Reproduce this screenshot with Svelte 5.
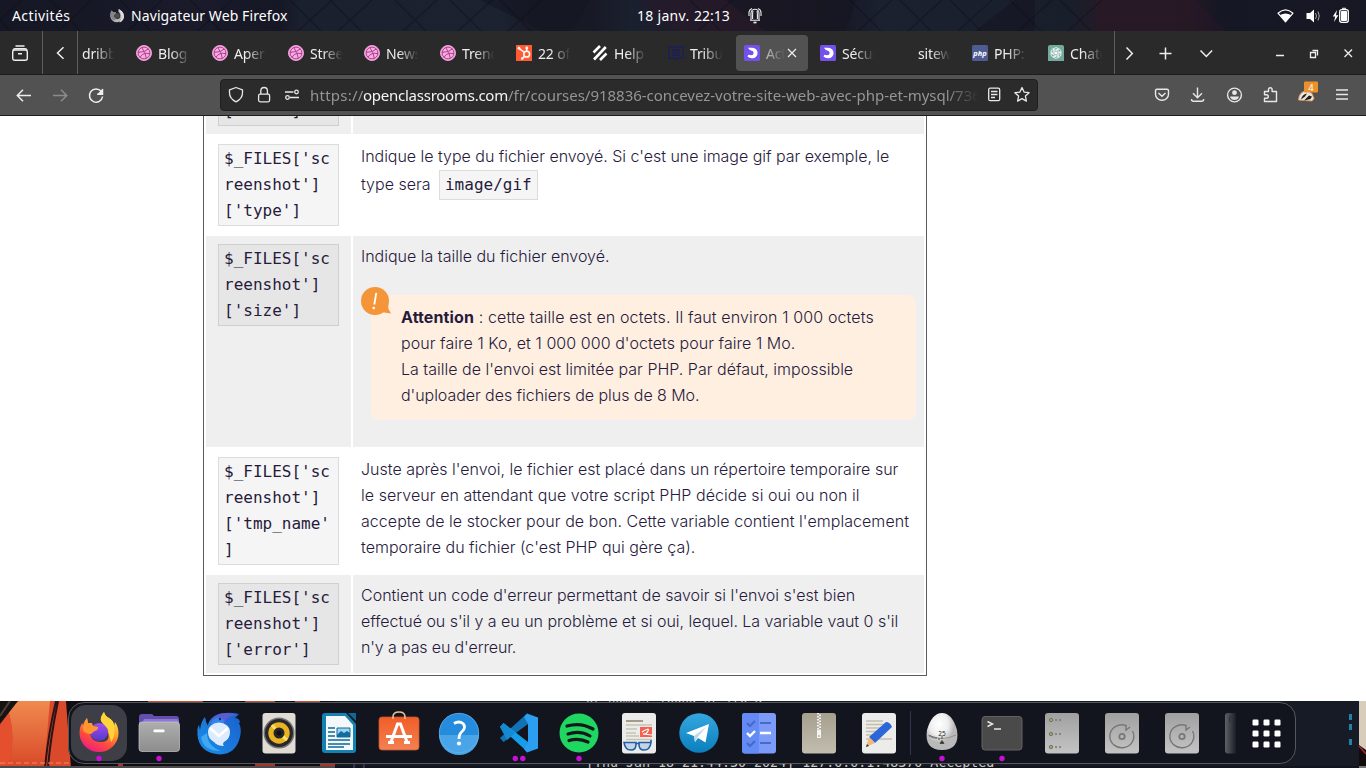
<script>
  const tabs = [
    { icon: 'dribbble', label: 'Blog' },
    { icon: 'dribbble', label: 'Aper' },
    { icon: 'dribbble', label: 'Stree' },
    { icon: 'dribbble', label: 'News' },
    { icon: 'dribbble', label: 'Trend' },
    { icon: 'hubspot', label: '22 of' },
    { icon: 'helpscout', label: 'Help' },
    { icon: 'tribune', label: 'Tribu' },
    { icon: 'oc', label: 'Act', active: true },
    { icon: 'oc', label: 'Sécur' },
    { icon: 'none', label: 'sitew' },
    { icon: 'php', label: 'PHP:' },
    { icon: 'gpt', label: 'Chatg' }
  ];
  const fence = [-20, 50, 120, 190, 290, 330, 395, 450, 500, 690, 850, 900, 950, 1010, 1060];
  const petals = [0, 60, 120, 180, 240, 300];
  const grid = [-13.5, -2.5, 8.5];
</script>

<div class="screen">
  <header class="topbar">
    <svg class="fence" width="1366" height="31">
      <path d="M480 0h110l-18 31h-30zM726 0h130l-10 31h-80zM1015 0h20v31h-60z" fill="#141622" opacity=".6" />
      <path d="M640 0h85l40 31h-90zM1096 0h100l30 31h-130z" fill="#34172a" opacity=".3" />
      {#each fence as x}
        <path d="M{x} 0l31 31M{x + 42} 0l-34 31" stroke="#0d1019" stroke-width="1.6" opacity=".4" />
      {/each}
    </svg>
    <span class="activities">Activités</span>
    <svg class="ffgrey" width="16" height="16" viewBox="0 0 16 16">
      <path d="M1.300 8.500Q1 5 2.600 2.500L4.400 4.400 6.800 4.200 7.200 6 5 7.500Q5 10.500 8 11 11.300 11 11.300 7.500 11 5 9.300 3.800L9.600.9Q15 3.500 15 8.400A6.900 6.600 0 0 1 1.300 8.500z" fill="#b4b4b4" />
      <path d="M9.600.9Q15 3.500 15 8.400 14.500 13 10.500 14.500 14 10 11.500 5z" fill="#dedede" />
      <path d="M1.300 8.500Q1 5 2.600 2.500L4.400 4.400 6.800 4.200 7.200 6 5 7.500Q5 10.500 8 11l-4 1.500z" fill="#858585" />
      <circle cx="8.200" cy="7.700" r="2.600" fill="#4c4c50" />
    </svg>
    <span class="appname">Navigateur Web Firefox</span>
    <span class="clock"><span class="date">18 janv.</span><span>22:13</span></span>
    <svg class="bell" width="16" height="18" viewBox="0 0 16 18" fill="none" stroke="#eee" stroke-width="1.1">
      <path d="M3 13.300h10M4 13V6.200a4 4 0 0 1 8 0V13M6 3.800Q5.500 5 5.600 12M10 3.800q.5 1.200.4 8.200M2 9V5.200Q2.400 2.400 5 1.400M14 9V5.200Q13.600 2.400 11 1.400" />
      <path d="M6.500 15.500h3" stroke-width="1.700" />
    </svg>
    <svg class="status" width="76" height="20" viewBox="0 0 76 20">
      <path d="M1 7.200Q8.500.5 16 7.200L8.500 15.800z" fill="none" stroke="#fff" stroke-width="1.200" stroke-linejoin="round" />
      <path d="M3 9Q8.500 6 14 9L8.500 16z" fill="#fff" />
      <path d="M29.500 7h3.500L37 3.500V16.500L33 13h-3.500z" fill="#fff" />
      <path d="M38.500 7q2 3 0 6M41 5.500q2.600 4.500 0 9" fill="none" stroke="#aaa" stroke-width="1" />
      <path d="M60 4l-4.200 6.500h2.400L57 16l4.400-6.700H59z" fill="#fff" />
      <rect x="62.700" y="3.700" width="8.600" height="12.600" rx="2" fill="none" stroke="#fff" stroke-width="1.300" />
      <path d="M65 2.300h4M64.500 5.500h5v9h-5z" stroke="#fff" stroke-width="1" fill="#fff" />
    </svg>
  </header>

  <div class="tabbar">
    <div class="cell view">
      <svg width="18" height="18" viewBox="0 0 18 18" fill="none" stroke="#eee" stroke-width="1.400"><rect x="1.700" y="6" width="14.600" height="10.300" rx="2" /><path d="M2 6q.5-1.200 2-1.200h10q1.500 0 2 1.200M4.500 2h9M7 9.700h4" /></svg>
    </div>
    <div class="cell prev">
      <svg width="10" height="14" viewBox="0 0 10 14" fill="none" stroke="#eee" stroke-width="1.500"><path d="M8.500 1.200l-6 5.800 6 5.800" /></svg>
    </div>
    <div class="tabs">
      <div class="tab first"><span class="label">dribb</span></div>
      {#each tabs as t}
        <div class="tab" class:active={t.active}>
          <svg width="16" height="16" viewBox="0 0 16 16">
            {#if t.icon === 'dribbble'}
              <circle cx="8" cy="8" r="7.500" fill="#f5aee2" stroke="#f2a0dc" />
              <g fill="none" stroke="#b23c8e" stroke-width="1"><circle cx="8" cy="8" r="5.900" /><path d="M5.800 2.500Q9.500 7 10.300 13.400M2.200 7.300Q9 7.500 12.400 4M4 12.300Q7 7 13.900 8.700" /></g>
            {:else if t.icon === 'hubspot'}
              <rect width="16" height="16" fill="#ff5c35" />
              <g fill="none" stroke="#fff" stroke-width="1.500"><circle cx="10.700" cy="9.200" r="2.900" /><path d="M10.700 6.200V3M8.500 7.500L3 3.300M8.600 11.300L6.500 13.300" /></g>
              <circle cx="10.700" cy="2.900" r="1.300" fill="#fff" /><circle cx="3" cy="3.200" r="1.400" fill="#fff" /><circle cx="6.200" cy="13.500" r="1.200" fill="#fff" />
            {:else if t.icon === 'helpscout'}
              <path d="M1.500 7.500L8 1M2 14.500L13.800 2M8 15L14.500 8.500" stroke="#fff" stroke-width="2.600" />
            {:else if t.icon === 'tribune'}
              <path d="M1 2h14v11H9.500L8 14.500 6.500 13H1zM4 5h8M4 7.500h8M4 10h8" fill="none" stroke="#1b1f5c" stroke-width="1.400" />
            {:else if t.icon === 'oc'}
              <rect width="16" height="16" rx="1.500" fill="#7451eb" />
              <path d="M4 2.800h4.400a5.200 5.200 0 0 1 0 10.400q-3.200.2-4.900-1.800l.8-1.600q5.200 1.400 5.400-1.800Q9.500 5.500 7 5.400 5 5.200 4 2.800z" fill="#fff" />
            {:else if t.icon === 'php'}
              <rect width="16" height="16" rx="1.500" fill="#4f5b93" />
              <text x="8" y="10.500" text-anchor="middle" font-size="7.500" font-weight="700" font-style="italic" font-family="Noto Sans, sans-serif" fill="#fff">php</text>
            {:else if t.icon === 'gpt'}
              <path d="M2 0h12q2 0 2 2v14H0V2Q0 0 2 0z" fill="#75a99c" />
              {#each petals as a}
                <path d="M5.200 8V5.300Q5.500 2.500 8.200 2.600 10 2.700 10.600 4.200L8 5.700v3" transform="rotate({a} 8 8)" fill="none" stroke="#fff" stroke-width=".8" />
              {/each}
            {/if}
          </svg>
          <span class="label">{t.label}</span>
          {#if t.active}
            <svg class="x" width="10" height="10" viewBox="0 0 10 10" stroke="#eee" stroke-width="1.200"><path d="M1 1l8 8M9 1L1 9" /></svg>
          {/if}
        </div>
      {/each}
    </div>
    <svg class="controls" width="251" height="43" viewBox="1115 31 251 43" fill="none" stroke="#eee" stroke-width="1.500">
      <path d="M1126.500 47.500l5.800 6-5.800 6M1159.500 53.500h12M1165.500 47.500v12M1200.500 50.500l5.800 6 5.800-6" />
      <path d="M1276 55.500h8M1310.500 52.500h5v5h-5zM1312.500 50.500h5v5M1344.500 49.500l7.500 7.500M1352 49.500l-7.500 7.500" stroke-width="1.300" />
    </svg>
  </div>

  <nav class="navbar">
    <svg class="navbtns" width="220" height="40" viewBox="0 76 220 40" fill="none" stroke="#eee" stroke-width="1.500">
      <path d="M31 96.500H17.500M23 90.800L17.300 96.500l5.700 5.700" />
      <path d="M53 96.500h13.500M61 90.800l5.700 5.700-5.700 5.700" stroke="#8c8c8c" />
      <path d="M101.300 92.500A6.600 6.600 0 1 0 102.600 97.500M102.500 90v5.200h-5.200" /><path d="M103 89.500v6h-6z" fill="#eee" stroke="none" />
    </svg>
    <div class="urlbar">
      <svg width="84" height="30" viewBox="221 80.500 84 30" fill="none" stroke="#e8e8e8" stroke-width="1.300">
        <path d="M236 88l6.500 2.300v3q0 6-6.500 9-6.500-3-6.500-9v-3z" stroke-linejoin="round" />
        <rect x="258.600" y="94.700" width="11" height="7.600" rx="1.500" /><path d="M260.800 94.500v-3.200a3.300 3.300 0 0 1 6.600 0v3.200" />
        <path d="M285 92.500h8.500M290 98h9" /><circle cx="296.500" cy="92.500" r="1.800" /><circle cx="287.500" cy="98" r="1.800" />
      </svg>
      <div class="url"><span class="u1">https://</span><span class="host">openclassrooms.com</span><span class="u2">/fr/courses/918836-concevez-votre-site-web-avec-php-et-mysql/736</span></div>
      <svg width="58" height="30" viewBox="979 80.500 58 30" fill="none" stroke="#e8e8e8" stroke-width="1.300">
        <rect x="988.700" y="88.700" width="11" height="12.500" rx="1.500" /><path d="M991 92h6.500M991 95h6.500M991 98h4" />
        <path d="M1022 88l2.100 4.600 5 .6-3.700 3.400 1 5-4.400-2.500-4.400 2.500 1-5-3.700-3.400 5-.6z" stroke-linejoin="round" />
      </svg>
    </div>
    <svg class="exts" width="328" height="40" viewBox="1038 75.500 328 40" fill="none" stroke="#e8e8e8" stroke-width="1.400">
      <path d="M1157 89.700h10q1.500 0 1.500 1.500v3.500a6.500 6 0 0 1-13 0v-3.500q0-1.500 1.500-1.500zM1158.500 93.500l3.500 3.200 3.500-3.200" />
      <path d="M1197.500 88v10M1193 93.800l4.500 4.500 4.500-4.500M1191.500 99.500q0 2.300 2 2.300h8q2.200 0 2.200-2.300" />
      <circle cx="1234.500" cy="95.500" r="6.900" /><circle cx="1234.500" cy="93.200" r="2.400" fill="#e8e8e8" stroke="none" /><path d="M1230 97h9q-1 3.500-4.500 3.500T1230 97z" fill="#e8e8e8" stroke="none" />
      <path d="M1264.500 92h4v-2a1.800 1.800 0 0 1 3.600 0v2h4.400v10h-12v-3.200h2a1.800 1.800 0 0 0 0-3.600h-2z" stroke-linejoin="round" />
      <path d="M1298.500 100.500Q1299 92 1307 91l5 3 2 5-2 2.500z" fill="#e9e6e2" stroke="#ed9854" stroke-width=".9" />
      <path d="M1301 100q1-5 6-6l-2 3zM1304 101l5-5 3 1-1.500 2.500z" fill="#1f1c1b" stroke="none" />
      <rect x="1304" y="82" width="14" height="11" rx="1" fill="#ee912a" stroke="none" />
      <text x="1311" y="91" text-anchor="middle" font-family="Noto Sans, sans-serif" font-size="9.500" fill="#fff" stroke="none">4</text>
      <path d="M1336 90.500h12M1336 95h12M1336 99.500h12" />
    </svg>
  </nav>

  <main>
    <div class="table">
      <div class="row r0 grey"><div class="k"><code>$_FILES['sc<br />reenshot']<br />['name']</code></div><div class="v"></div></div>
      <div class="row r1"><div class="k"><code>$_FILES['sc<br />reenshot']<br />['type']</code></div>
        <div class="v"><span class="t1">Indique le type du fichier envoyé. Si c'est une image gif par exemple, le</span><br />type sera <code class="inline">image/gif</code></div></div>
      <div class="row r2 grey"><div class="k"><code>$_FILES['sc<br />reenshot']<br />['size']</code></div>
        <div class="v">Indique la taille du fichier envoyé.
          <aside>
            <svg class="warn" width="32" height="30" viewBox="0 0 32 30"><circle cx="14" cy="14" r="14" fill="#f5953a" /><path d="M27 17l.5 5 2.500 4.500L20 25z" fill="#f5953a" /><path d="M15.300 5.800L13.300 17.500" stroke="#fff" stroke-width="1.800" /><circle cx="12.700" cy="21" r="1.300" fill="#fff" /></svg>
            <span class="w3"><b>Attention</b> : cette taille est en octets. Il faut environ 1 000 octets</span><br /><span class="w2">pour faire 1 Ko, et 1 000 000 d'octets pour faire 1 Mo.</span><br /><span class="w1">La taille de l'envoi est limitée par PHP. Par défaut, impossible</span><br /><span class="t2">d'uploader des fichiers de plus de 8 Mo.</span>
          </aside>
        </div></div>
      <div class="row r3"><div class="k"><code>$_FILES['sc<br />reenshot']<br />['tmp_name'<br />]</code></div>
        <div class="v">Juste après l'envoi, le fichier est placé dans un répertoire temporaire sur<br /><span class="w2">le serveur en attendant que votre script PHP décide si oui ou non il</span><br /><span class="w2">accepte de le stocker pour de bon. Cette variable contient l'emplacement</span><br />temporaire du fichier (c'est PHP qui gère ça).</div></div>
      <div class="row r4 grey"><div class="k"><code>$_FILES['sc<br />reenshot']<br />['error']</code></div>
        <div class="v">Contient un code d'erreur permettant de savoir si l'envoi s'est bien<br /><span class="t1">effectué ou s'il y a eu un problème et si oui, lequel. La variable vaut 0 s'il</span><br /><span class="t3">n'y a pas eu d'erreur.</span></div></div>
    </div>
  </main>

  <footer>
    <svg class="wall" width="1366" height="67" viewBox="0 701 1366 67">
      <defs>
        <linearGradient id="or" x2="0" y2="1"><stop stop-color="#f08a50" /><stop offset="1" stop-color="#d84826" /></linearGradient>
      </defs>
      <rect y="701" width="1366" height="67" fill="#171b26" />
      <rect y="701" width="335" height="67" fill="#110d10" />
      <path d="M0 718L12 701H66L71 768H0z" fill="#da4929" />
      <path d="M8 712Q14 701 20 701H50L44 768H8q9-32 0-56z" fill="url(#or)" /><path d="M0 726l9-14q7 28-1 53H0z" fill="#e4502e" />
      <path d="M56 701Q48 735 45 768M58 701Q50 740 48 768" stroke="#2b1417" stroke-width="2" fill="none" /><path d="M0 701h18L0 724z" fill="#171313" /><path d="M0 716L10 701" stroke="#4c4038" stroke-width="2" />
      <path d="M0 763h70" stroke="#ef8970" stroke-width="1" stroke-dasharray="5 3" />
      <path d="M148 701h55M245 701h30M295 701h25" stroke="#c94a2c" stroke-width="2" />
      <path d="M118 765h5M255 765h20M320 765h15" stroke="#a93424" stroke-width="2" />
      <rect y="766" width="335" height="2" fill="#4b4a4e" />
      <rect x="335" y="766" width="1031" height="2" fill="#11141c" />
      <circle cx="359" cy="766" r="5" stroke="#36374e" fill="none" stroke-width="2" />
      <text x="586" y="702.500" class="term">or number found or fro a</text>
      <text x="586" y="767" class="term line">[Thu Jan 18 21:44:30 2024] 127.0.0.1:48370 Accepted</text>
      <path d="M1350.500 714v6M1350.500 724v6M1350.500 739v6" stroke="#1c83ab" stroke-width="3" />
      <rect x="1359" y="701" width="7" height="67" fill="#d8cdbb" /><path d="M1359 745l7 5v18h-7z" fill="#120c0d" /><path d="M1359 746l7 8" stroke="#a52d2d" stroke-width="1.500" /><rect x="1359" y="766" width="7" height="2" fill="#777" />
    </svg>
    <div class="dock">
      <svg class="i" viewBox="-30 -30 60 60">
        <defs>
          <linearGradient id="fx" x1=".8" y1="0" x2=".3" y2="1"><stop stop-color="#fff44f" /><stop offset=".4" stop-color="#ffa32c" /><stop offset=".7" stop-color="#ff4b3d" /><stop offset="1" stop-color="#ec1b83" /></linearGradient>
          <linearGradient id="gl" x2="0" y2="1"><stop stop-color="#a14cf4" /><stop offset="1" stop-color="#5639c7" /></linearGradient>
        </defs>
        <rect x="-28" y="-28" width="56" height="56" rx="15" fill="#3d3e46" />
        <path d="M5-21Q1-16 2-12L8-3Q13 9 2 9-9 9-9-2L-8-9l-3-1-1-5Q-15-12-16-8l-1-2Q-19.500-6-19.500 0A19.400 19 0 0 0 19.500 0Q19.500-6 16-11L15-7Q15-12 10-15 6-17 5-21z" fill="url(#fx)" />
        <circle cx="0" cy="-1" r="9" fill="url(#gl)" />
        <path d="M5-21Q1-16 2-12L9-4 12 9Q17 3 15-7 15-12 10-15 6-17 5-21z" fill="#ffd43a" />
        <path d="M-12-15Q-14-12-15-8-17-5-15-1-11 1-8 1-5-2-2-3 0-5-1-6L-6-7-7-10-11-10z" fill="#ff9630" />
        <circle cy="25.500" r="2.700" fill="#c80fd4" />
      </svg>
      <svg class="i" viewBox="-30 -30 60 60">
        <linearGradient id="fo" x2="0" y2="1"><stop stop-color="#aeaeae" /><stop offset="1" stop-color="#8d8d8d" /></linearGradient>
        <path d="M-20-16q0-3 3-3H-8q2 0 3 2h22q3 0 3 3V5h-40z" fill="#6350ac" /><path d="M-15-14h32q3 0 3 3v5h-38z" fill="#8e78d7" />
        <rect x="-20" y="-11" width="40.500" height="29.500" rx="3" fill="url(#fo)" stroke="#c8c8c8" stroke-width=".7" /><rect x="-5.500" y="-3.500" width="11" height="2.700" rx="1" fill="#fff" />
        <circle cy="25.500" r="2.700" fill="#c80fd4" />
      </svg>
      <svg class="i" viewBox="-30 -30 60 60">
        <linearGradient id="tb" x1="1" x2="0" y2="1"><stop stop-color="#1a5fcc" /><stop offset="1" stop-color="#1b8fe8" /></linearGradient>
        <path d="M-12-1Q-12-19 6-20q7-1 14 1l-4 4q4 0 5 4l-1 1q3 6 1 14Q17 21 1 21.500-20 20-21.500 2-22-6-20-8l1 5Q-18-12-14-16-13-10-11-7z" fill="url(#tb)" />
        <path d="M-9-9Q-5-20 7-20q6 0 11 2Q9-17 7-13 6-10 2-9z" fill="#5c5bd4" /><path d="M-9-9q5-8 12-6 3 2 1 7z" fill="#3485eb" /><path d="M-18 4Q-16 18 2 18-12 13-12 0z" fill="#40a9f3" />
        <path d="M-11-1A11 9.500 0 0 1 11-1Q11 6 5 9 3 11 5 13-2 13-5 9-11 6-11-1z" fill="#dcebfd" /><path d="M-9-5L0 3 9-5" fill="none" stroke="#fff" stroke-width="2.500" /><circle cx="1" cy="-14" r="1.200" fill="#142a67" />
      </svg>
      <svg class="i" viewBox="-30 -30 60 60">
        <rect x="-16.500" y="-20" width="33" height="40.500" rx="3" fill="#e0dcd3" /><circle r="15.500" fill="#777574" /><circle r="14" fill="#27282b" /><circle r="10.700" fill="#e9b321" /><path d="M0 0L-7-8M0 0L8 7" stroke="#ffdf67" stroke-width="3" /><circle r="5.500" fill="#26262a" /><circle r="2.500" fill="#111" />
      </svg>
      <svg class="i" viewBox="-30 -30 60 60">
        <path d="M-14-20H7L17-9V17q0 3-3 3h-28q-3 0-3-3V-17q0-3 3-3z" fill="#1482b5" /><path d="M-13-17H6L14-8V17h-27z" fill="#f5f8fa" /><path d="M9-20h8v8z" fill="#0e6995" />
        <path d="M-11-5h7M-11-1h7M-11 3h7M-11 7H11M-11 11H11M-11 14H5" stroke="#0b6898" stroke-width="1.700" /><path d="M-2-5h13V4H-2z" fill="#9ed2ed" stroke="#126d9c" /><path d="M-2 2l4-4 3 2 3-2 3 2v4H-2z" fill="#126d9c" />
      </svg>
      <svg class="i" viewBox="-30 -30 60 60">
        <linearGradient id="sw" x2="0" y2="1"><stop stop-color="#f25d26" /><stop offset="1" stop-color="#f28153" /></linearGradient>
        <rect x="-20" y="-16" width="40" height="33" rx="3" fill="url(#sw)" stroke="#c45435" stroke-width=".8" /><path d="M-6-14v-2q0-5 6-5t6 5v2" fill="none" stroke="#e8c28c" stroke-width="1.600" />
        <path d="M-8 9L-1.500-9h3L8 9M-13 3.500h26M-11 9.500h6M5 9.500h6" fill="none" stroke="#fff" stroke-width="3" />
      </svg>
      <svg class="i" viewBox="-30 -30 60 60">
        <circle r="20" fill="#258bdc" /><path d="M-20 2h40a20 20 0 0 1-40 0z" fill="#4aa5e8" /><circle r="19.700" fill="none" stroke="#69b2ec" stroke-width=".7" /><path d="M-5-9.500Q0-12.500 4-9.500 7-6 4-2.500 0 .5 0 6" fill="none" stroke="#fff" stroke-width="2.800" /><circle cy="10.500" r="2.100" fill="#fff" />
      </svg>
      <svg class="i" viewBox="-30 -30 60 60">
        <path d="M8-19.500L-19 5l3.500 4L9-9z" fill="#1173b5" /><path d="M8 18.500L-19-6l3.500-4L9 9z" fill="#169ce8" /><path d="M8-19.500l11 4v31l-11 4-3-3.500L9 9V-9L5-16z" fill="#2c9ef0" />
        <path d="M-19-6l3.500-4L-4 0l-8 7z" fill="#1689d5" /><circle cx="-3.700" cy="25.500" r="2.700" fill="#c80fd4" /><circle cx="3.800" cy="25.500" r="2.700" fill="#c80fd4" />
      </svg>
      <svg class="i" viewBox="-30 -30 60 60">
        <circle r="19.500" fill="#1fd660" /><path d="M-12-7Q2-11 14-4M-11 1Q1-3 11 3M-10 7.500Q0 4.500 9 9" fill="none" stroke="#14191a" stroke-width="3.200" stroke-linecap="round" /><circle cy="25.500" r="2.700" fill="#c80fd4" />
      </svg>
      <svg class="i" viewBox="-30 -30 60 60">
        <rect x="-17" y="-20" width="34" height="40.500" rx="3" fill="#ebebe9" /><path d="M-13-12H4" stroke="#a49c88" stroke-width="2" /><path d="M-13-8H13M-13-4H-2M-13 0H-3M-13 3H0M-13 6.500H13" stroke="#c6c2b5" stroke-width="1.400" /><rect x="1" y="-6" width="12" height="10" fill="#f4614f" /><path d="M3-1q8-5 6-1T4 1l9 1" fill="none" stroke="#fff" stroke-width="1.200" />
        <path d="M-15 9.500h12v2q0 5.500-5 5.500-6 0-7-7.500zM0 9.500h12q-1 7.500-7 7.500-5 0-5-5.500zM-3 10.500h3M12 9.500V7" fill="#9dbddc" fill-opacity=".5" stroke="#1f5da8" stroke-width="1.600" />
      </svg>
      <svg class="i" viewBox="-30 -30 60 60"><linearGradient id="te" x2="0" y2="1"><stop stop-color="#35a7df" /><stop offset="1" stop-color="#0b7fbd" /></linearGradient><circle r="19.700" fill="url(#te)" /><path d="M-13 0L10-9 6.500 9.500-1 5l-3 4-1-6z" fill="#fff" /><path d="M-5 3L7-6-2 5l-2 4z" fill="#bdd8e8" /></svg>
      <svg class="i" viewBox="-30 -30 60 60"><rect x="-17" y="-20" width="34" height="40.500" rx="3" fill="#7c9bf8" /><path d="M-14-20H0v40.500h-14q-3 0-3-3v-34.500q0-3 3-3z" fill="#638af5" /><path d="M-12-10l3 3 5-5M1-10h11M-12 10l3 3 5-5M1 10h11" stroke="#476bc4" stroke-width="2.200" fill="none" /><path d="M-12 0l3 3 5-5M1 0h11" stroke="#fff" stroke-width="2.400" fill="none" /></svg>
      <svg class="i" viewBox="-30 -30 60 60"><linearGradient id="zp" x2="0" y2="1"><stop stop-color="#a69f8e" /><stop offset="1" stop-color="#c2bdaf" /></linearGradient><rect x="-17" y="-20" width="34" height="40.500" rx="3" fill="url(#zp)" /><path d="M-1-20V-2" stroke="#f4f4f1" stroke-width="2" stroke-dasharray="1.500 1.500" /><path d="M1-18.500V-2" stroke="#f4f4f1" stroke-width="2" stroke-dasharray="1.500 1.500" /><path d="M-2-3h4v8h-4z" fill="#f4f4f1" /><path d="M0 2v2" stroke="#999" /></svg>
      <svg class="i" viewBox="-30 -30 60 60"><rect x="-17" y="-20" width="34" height="40.500" rx="3" fill="#ececea" /><path d="M-13-12H4M-13-8.500H7M-13-5H5M-13-1.500H2M-13 2H-2M-13 6H13" stroke="#c2bdad" stroke-width="1.500" /><path d="M7-11q4 0 6 5L-4 10l-6-6z" fill="#2c66d8" /><path d="M-10 4l6 6-9 4z" fill="#f4b879" /><path d="M-13 14l1-3 2 2z" fill="#333" /></svg>
      <span class="sep"></span>
      <svg class="i" viewBox="-30 -30 60 60"><radialGradient id="eg" cx=".4" cy=".3"><stop stop-color="#fff" /><stop offset=".6" stop-color="#eee" /><stop offset="1" stop-color="#b9b9b9" /></radialGradient><path d="M0-20Q10-20 15-3 18 17 0 17T-15-3Q-10-20 0-20z" fill="url(#eg)" /><path d="M-14 2Q0 9 14 2" fill="none" stroke="#888" stroke-width=".8" /><text x="0" y="2.500" text-anchor="middle" font-family="Noto Sans, sans-serif" font-size="6.500" fill="#222">25</text><path d="M-12 2v2M-10 3v2M-8 3.500v2M-6 4v2M-3 5v2M0 3v3M-2 10.500L0 7.500l2 3z" stroke="#444" stroke-width=".9" fill="#333" /><circle cy="25.500" r="2.700" fill="#c80fd4" /></svg>
      <svg class="i" viewBox="-30 -30 60 60"><rect x="-20" y="-16.500" width="40" height="33.500" rx="3" fill="#4a4a4a" stroke="#626262" /><path d="M-14.500-11.500l5 2.500-5 2.500M-8-4h7" fill="none" stroke="#e9e6df" stroke-width="1.500" /><circle cy="25.500" r="2.700" fill="#c80fd4" /></svg>
      <svg class="i" viewBox="-30 -30 60 60"><linearGradient id="dk" x2="0" y2="1"><stop stop-color="#a0a0a0" /><stop offset="1" stop-color="#c4c4c4" /></linearGradient><rect x="-17" y="-20" width="34" height="40.500" rx="3" fill="url(#dk)" />{#each [-13, 1, 14] as y}<circle cx="-11" cy={y} r="1.700" fill="#8eb44e" stroke="#70736d" /><path d="M-7 {y}h2M-3 {y}h2" stroke="#777" stroke-width="1.600" />{/each}</svg>
      {#each [0, 1] as n}
        <svg class="i" viewBox="-30 -30 60 60"><rect x="-17" y="-20" width="34" height="40.500" rx="3" fill="url(#dk)" /><circle cy="3.500" r="2.700" fill="none" stroke="#777" stroke-width="1.800" /><path d="M10.500-2A12 11.500 0 1 1 4-7.500V-3l4-3" fill="none" stroke="#777" stroke-width="1.400" /></svg>
      {/each}
      <svg class="part" viewBox="0 0 24 60"><linearGradient id="pt"><stop stop-color="#5e6167" /><stop offset="1" stop-color="#1a1d24" /></linearGradient><path d="M16 10h8v40.500h-8q-3 0-3-3V13q0-3 3-3z" fill="url(#pt)" /><path d="M18 19q-2-6 4-6" fill="none" stroke="#33363b" stroke-width="1.500" /></svg>
      <svg class="i" viewBox="-30 -30 60 60">{#each grid as y}{#each grid as x}<rect {x} {y} width="6" height="6" rx="1.200" fill="#fff" />{/each}{/each}</svg>
    </div>
  </footer>
</div>

<style>
  :global(body) { margin: 0; overflow: hidden; }
  .screen { width: 1366px; height: 768px; overflow: hidden; display: flex; flex-direction: column; background: #fff; font-family: "Noto Sans", sans-serif; }
  svg { display: block; flex: none; }
  .topbar { position: relative; height: 31px; flex: none; display: flex; align-items: center; color: #fff; font-size: 14px; white-space: nowrap; background: linear-gradient(90deg, #151724 0, #1a1a2a 200px, #151724 280px, #1b202e 300px, #1c2230 500px, #171925 540px, #171925 590px, #1b202e 630px, #1d1b29 700px, #201823 800px, #181a28 850px, #1b212f 880px, #191e2b 1070px, #231a26 1100px, #221924 1190px, #151724 1220px, #161824 1366px); }
  .fence { position: absolute; left: 0; top: 0; }
  .activities { position: relative; margin-left: 12px; width: 97px; letter-spacing: .4px; }
  .ffgrey { position: relative; margin-right: 6px; }
  .appname { position: relative; width: 506px; letter-spacing: .1px; }
  .clock { position: relative; display: flex; width: 112px; }
  .date { width: 57px; letter-spacing: .3px; }
  .bell { position: relative; margin-left: -2px; }
  .status { position: relative; margin-left: auto; margin-right: 13px; }
  .tabbar { height: 43px; flex: none; display: flex; background: #2a2a2a; border-bottom: 1px solid #1d1d1d; }
  .cell { border-right: 1px solid #5c5c5c; display: flex; align-items: center; justify-content: center; box-sizing: border-box; }
  .view { width: 43px; padding-right: 2px; }
  .prev { width: 35px; }
  .tabs { width: 1036px; flex: none; display: flex; align-items: center; overflow: hidden; border-right: 1px solid #5c5c5c; }
  .tab { box-sizing: border-box; width: 72px; margin-right: 4px; height: 36px; flex: none; display: flex; align-items: center; padding-left: 8px; border-radius: 4px; }
  .tab.first { width: 50px; margin: 0; padding-left: 4px; }
  .label { width: 33px; margin-left: 6px; padding-top: 1px; color: #eee; font-size: 14px; letter-spacing: -.15px; white-space: nowrap; overflow: hidden; mask-image: linear-gradient(90deg, #000 38%, transparent 98%); }
  .first .label { margin-left: 0; }
  .active { background: #525252; }
  .active .label { width: 19px; mask-image: linear-gradient(90deg, rgba(0, 0, 0, .65) 10%, transparent 100%); }
  .x { margin-left: 2px; }
  .navbar { height: 40px; flex: none; display: flex; align-items: center; background: #525252; border-bottom: 1px solid #1d1d1d; }
  .urlbar { width: 816px; height: 30px; flex: none; display: flex; align-items: center; background: #2b2b2b; border: 1px solid #1f1f1f; border-radius: 4px; }
  .url { margin-left: 5px; width: 669px; flex: none; display: flex; overflow: hidden; color: #959595; font-size: 15px; line-height: 28px; white-space: nowrap; mask-image: linear-gradient(90deg, #000 95%, transparent 100%); }
  .u1 { width: 53px; letter-spacing: .25px; }
  .host { width: 145px; color: #f5f5f5; letter-spacing: -.25px; }
  .u2 { letter-spacing: -.02px; }
  main { height: 585px; flex: none; overflow: hidden; display: flex; align-items: flex-end; }
  .table { box-sizing: border-box; width: 724px; margin: 0 0 25px 203px; padding: 2px; border: 1px solid #5b5b5f; border-top: 0; display: grid; gap: 2px; color: #271a3c; font: 300 16px/26px Inter, sans-serif; white-space: nowrap; }
  .row { display: grid; grid-template-columns: 145px 571px; gap: 2px; }
  .row > .k { box-sizing: border-box; padding: 8px 12px; }
  .row > .v { box-sizing: border-box; padding: 7px 8px 8px; }
  .r0, .r1, .r4 { height: 98px; }
  .r2 { height: 211px; }
  .r3 { height: 124px; }
  .grey > div { background: #efefef; }
  .t1 { letter-spacing: -.028px; }
  .t2 { letter-spacing: -.05px; }
  .t3 { letter-spacing: -.13px; }
  .w1 { letter-spacing: .015px; }
  .w2 { letter-spacing: .055px; }
  .w3 { letter-spacing: .12px; }
  code { box-sizing: border-box; display: block; padding: 1px 5px; border: 1px solid #dcdcdc; background: #f5f5f5; font: 400 16px/26px "DejaVu Sans Mono", monospace; }
  .grey code { background: #e6e6e6; border-color: #d0d0d0; }
  code.inline { display: inline-block; margin: 1px 0 0 4px; }
  aside { box-sizing: border-box; position: relative; height: 125px; margin: 26px 0 0 10px; padding: 9px 0 0 30px; border-radius: 8px; background: #feefe1; }
  .warn { position: absolute; left: -10px; top: -8px; }
  b { font-weight: 700; }
  footer { position: relative; height: 67px; flex: none; }
  .wall { position: absolute; left: 0; top: 0; }
  .term { font: 12.2px "DejaVu Sans Mono", monospace; fill: #c9c9c0; }
  .term.line { font-size: 13.3px; }
  .dock { box-sizing: border-box; position: relative; width: 1228px; height: 62px; margin-left: 68px; top: 1px; display: flex; background: #12151d; border: 1px solid #55575a; border-radius: 16px; overflow: hidden; }
  .i { width: 60px; height: 60px; }
  .sep { width: 1px; height: 44px; margin: 8px 1px 0; background: #303650; flex: none; }
  .part { width: 24px; height: 60px; }
</style>
